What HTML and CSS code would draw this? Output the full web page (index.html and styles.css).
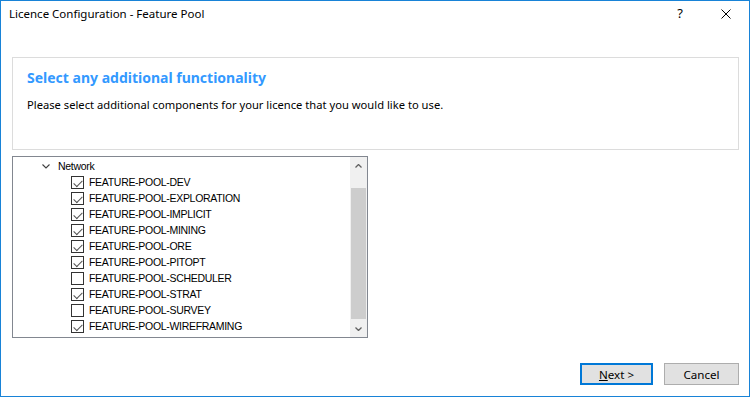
FILE: index.html
```html
<!DOCTYPE html>
<html lang="en">
<head>
  <meta charset="UTF-8" />
  <title>Licence Configuration - Feature Pool</title>
  <link rel="stylesheet" href="styles.css">
</head>
<body>

  <div class="window">
    <div class="titlebar">
      <span class="title">Licence Configuration - Feature Pool</span>
      <span class="help">?</span>
      <span class="close">
        <svg viewBox="0 0 10 10" width="10" height="10"><path d="M0.5 0.5 L9.5 9.5 M9.5 0.5 L0.5 9.5" stroke="#000" stroke-width="1" fill="none"/></svg>
      </span>
    </div>

    <div class="content">
      <div class="header-panel">
        <h1>Select any additional functionality</h1>
        <p>Please select additional components for your licence that you would like to use.</p>
      </div>

      <div class="tree">
        <div class="tree-items">
          <div class="node">
            <svg class="chevron" viewBox="0 0 8 5" width="8" height="5"><path d="M0.5 0.5 L4 4 L7.5 0.5" stroke="#404040" stroke-width="1.1" fill="none"/></svg>
            <span>Network</span>
          </div>
          <div class="leaf checked"><span class="box"></span>FEATURE-POOL-DEV</div>
          <div class="leaf checked"><span class="box"></span>FEATURE-POOL-EXPLORATION</div>
          <div class="leaf checked"><span class="box"></span>FEATURE-POOL-IMPLICIT</div>
          <div class="leaf checked"><span class="box"></span>FEATURE-POOL-MINING</div>
          <div class="leaf checked"><span class="box"></span>FEATURE-POOL-ORE</div>
          <div class="leaf checked"><span class="box"></span>FEATURE-POOL-PITOPT</div>
          <div class="leaf"><span class="box"></span>FEATURE-POOL-SCHEDULER</div>
          <div class="leaf checked"><span class="box"></span>FEATURE-POOL-STRAT</div>
          <div class="leaf"><span class="box"></span>FEATURE-POOL-SURVEY</div>
          <div class="leaf checked"><span class="box"></span>FEATURE-POOL-WIREFRAMING</div>
        </div>
        <div class="scrollbar">
          <div class="arrow">
            <svg viewBox="0 0 7 4" width="7" height="4"><path d="M0.5 3.5 L3.5 0.5 L6.5 3.5" stroke="#606060" stroke-width="1.3" fill="none"/></svg>
          </div>
          <div class="track"><div class="thumb"></div></div>
          <div class="arrow">
            <svg viewBox="0 0 7 4" width="7" height="4"><path d="M0.5 0.5 L3.5 3.5 L6.5 0.5" stroke="#606060" stroke-width="1.3" fill="none"/></svg>
          </div>
        </div>
      </div>

      <div class="buttons">
        <button class="btn primary"><u>N</u>ext &gt;</button>
        <button class="btn">Cancel</button>
      </div>
    </div>
  </div>

</body>
</html>
```

FILE: styles.css
```css
body {
  margin: 0;
  background: #ffffff;
  font-family: 'Noto Sans', sans-serif;
  font-size: 12px;
  color: #000;
}

.window {
  width: 748px;
  height: 395px;
  border: 1px solid #1883d7;
  background: #ffffff;
  display: flex;
  flex-direction: column;
}

.titlebar {
  height: 29px;
  display: flex;
  align-items: center;
  padding-left: 8px;
}

.title {
  flex: 1;
  font-size: 11.5px;
  margin-top: -5px;
}

.help {
  width: 46px;
  text-align: center;
  font-size: 13px;
  margin-top: -5px;
}

.close {
  width: 46px;
  display: flex;
  justify-content: center;
  margin-top: -4px;
}

.content {
  padding: 0 10px 0 11px;
  display: flex;
  flex-direction: column;
  flex: 1;
}

.header-panel {
  margin-top: 27px;
  height: 91px;
  border: 1px solid #dcdcdc;
  padding: 0 14px;
}

.header-panel h1 {
  margin: 10px 0 0 0;
  font-size: 14px;
  font-weight: bold;
  color: #3399ff;
  line-height: 20px;
}

.header-panel p {
  margin: 9px 0 0 0;
  font-size: 11.2px;
  line-height: 16px;
}

.tree {
  margin-top: 6px;
  width: 354px;
  height: 180px;
  border: 1px solid #828790;
  display: flex;
}

.tree-items {
  flex: 1;
  padding-top: 1px;
  font-family: 'Liberation Sans', sans-serif;
  font-size: 10.5px;
  letter-spacing: -0.3px;
}

.node, .leaf {
  height: 16px;
  display: flex;
  align-items: center;
  white-space: nowrap;
}

.node {
  padding-left: 29px;
}

.chevron {
  margin-right: 8px;
}

.leaf {
  padding-left: 58px;
  color: #000;
}

.box {
  width: 11px;
  height: 11px;
  border: 1px solid #333333;
  margin-right: 5px;
  position: relative;
  flex-shrink: 0;
}

.leaf.checked .box::after {
  content: "";
  position: absolute;
  left: 2px;
  top: 0px;
  width: 7px;
  height: 4px;
  border-left: 1px solid #555;
  border-bottom: 1px solid #555;
  transform: translate(0, 3px) rotate(-45deg) scaleX(1.05);
}

.scrollbar {
  width: 17px;
  background: #f0f0f0;
  display: flex;
  flex-direction: column;
}

.arrow {
  height: 17px;
  display: flex;
  align-items: center;
  justify-content: center;
}

.track {
  flex: 1;
  padding-top: 14px;
  padding-bottom: 1px;
  display: flex;
}

.thumb {
  flex: 1;
  margin: 0 1px;
  background: #cdcdcd;
}

.buttons {
  display: flex;
  justify-content: flex-end;
  gap: 11px;
  margin-top: 25px;
}

.btn {
  width: 75px;
  height: 22px;
  font-family: 'Noto Sans', sans-serif;
  font-size: 11.6px;
  background: #e1e1e1;
  border: 1px solid #adadad;
  padding: 0;
  color: #000;
}

.btn.primary {
  border: 2px solid #0078d7;
  width: 73px;
}
```
